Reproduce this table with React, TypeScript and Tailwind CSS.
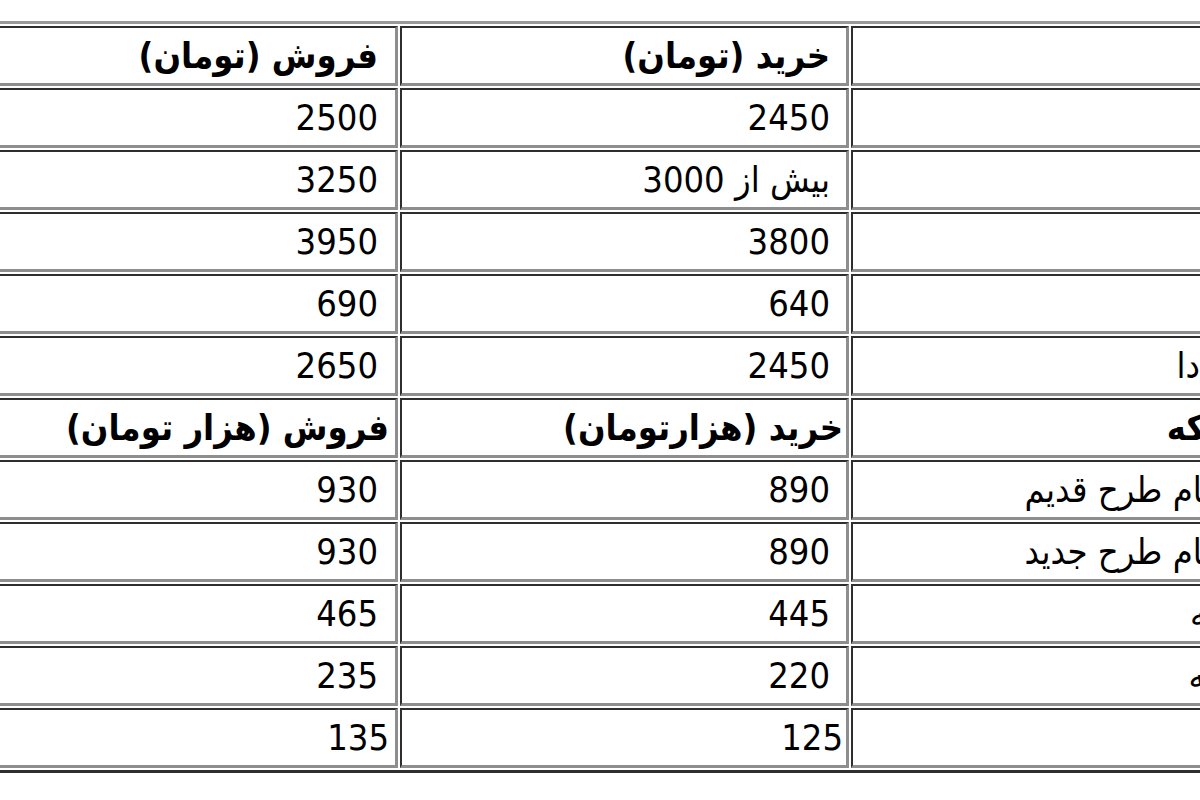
type Row = { desc: string; buy: string; sell: string; head?: boolean; tight?: boolean };

const rows: Row[] = [
  { desc: "", buy: "خرید (تومان)", sell: "فروش (تومان)", head: true },
  { desc: "دلار", buy: "2450", sell: "2500" },
  { desc: "یورو", buy: "بیش از 3000", sell: "3250" },
  { desc: "پوند", buy: "3800", sell: "3950" },
  { desc: "درهم", buy: "640", sell: "690" },
  { desc: "دلار کانادا", buy: "2450", sell: "2650" },
  { desc: "نوع سکه", buy: "خرید (هزارتومان)", sell: "فروش (هزار تومان)", head: true, tight: true },
  { desc: "سکه تمام طرح قدیم", buy: "890", sell: "930" },
  { desc: "سکه تمام طرح جدید", buy: "890", sell: "930" },
  { desc: "نیم سکه", buy: "445", sell: "465" },
  { desc: "ربع سکه", buy: "220", sell: "235" },
  { desc: "گرمی", buy: "125", sell: "135", tight: true },
];

const cell =
  "flex h-[60px] items-center whitespace-nowrap overflow-hidden bg-white border-t-2 border-l-2 border-b-[3px] border-r-[3px] border-t-[#2e2e2e] border-l-[#2e2e2e] border-b-[#8e8e8e] border-r-[#8e8e8e]";

export default function App() {
  return (
    <div className="h-[800px] w-[1200px] overflow-hidden bg-white pt-[21px] font-['DejaVu_Sans_Condensed','DejaVu_Sans',sans-serif] text-[36px] leading-none text-black">
      <div
        dir="rtl"
        className="-ml-[56px] grid w-max grid-cols-[471px_449px_449px] gap-[2px] border-[3px] border-t-[#999999] border-l-[#999999] border-b-[#2e2e2e] border-r-[#2e2e2e] bg-white p-[2px]"
      >
        {rows.map((r, i) => (
          <div key={i} className="contents">
            <div className={`${cell} pr-[16px] ${r.head ? "font-bold" : ""}`}>
              {r.desc}
            </div>
            <div
              className={`${cell} ${r.tight ? "pr-[3px]" : "pr-[16px]"} ${r.head ? "font-bold" : ""}`}
            >
              {r.buy}
            </div>
            <div
              className={`${cell} ${r.tight ? "pr-[6px]" : "pr-[17px]"} ${r.head ? "font-bold" : ""}`}
            >
              {r.sell}
            </div>
          </div>
        ))}
      </div>
    </div>
  );
}
